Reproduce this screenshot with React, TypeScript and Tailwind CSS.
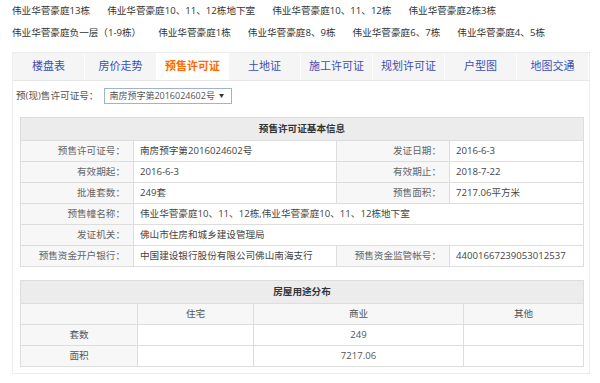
// 楼盘详情 — 预售许可证 tab

const rowA = ["伟业华菅豪庭13栋", "伟业华菅豪庭10、11、12栋地下室", "伟业华菅豪庭10、11、12栋", "伟业华菅豪庭2栋3栋"];
const rowB = ["伟业华菅豪庭负一层（1-9栋）", "伟业华菅豪庭1栋", "伟业华菅豪庭8、9栋", "伟业华菅豪庭6、7栋", "伟业华菅豪庭4、5栋"];
const tabs = ["楼盘表", "房价走势", "预售许可证", "土地证", "施工许可证", "规划许可证", "户型图", "地图交通"];

const lab = "bg-[#f7f7f7] border border-[#dddddd] text-right pr-[8px] text-[#666666] font-normal";
const val = "border border-[#dddddd] text-left pl-[6px] text-[#444444]";
const cell = "border border-[#dddddd] text-center text-[#555555]";

export default function App() {
  return (
    <div className="w-[600px] h-[383px] overflow-hidden bg-white font-['Open_Sans','Noto_Sans_CJK_SC',sans-serif] text-[9.6px] text-[#333333]">
      <div className="px-[12px]">
        <div className="h-[22px] flex items-center gap-x-[17px]">
          {rowA.map(t => <span key={t} className="whitespace-nowrap">{t}</span>)}
        </div>
        <div className="h-[22px] flex items-center gap-x-[17px]">
          {rowB.map(t => <span key={t} className="whitespace-nowrap">{t}</span>)}
        </div>
      </div>

      <div className="mx-[12px] mt-[8px] w-[578px] border border-[#ececec] pb-[6px]">
        <div className="flex h-[28px] bg-[#f5f5f5] border-b border-[#e6e6e6]">
          {tabs.map(t => (
            <div key={t}
              className={`w-[72px] flex items-center justify-center text-[11px] border-r border-white ${t === "预售许可证" ? "bg-white text-[#ff6a00] font-bold" : "text-[#3b4fb8]"}`}>{t}</div>
          ))}
        </div>

        <div className="flex items-center h-[16px] mt-[7px] pl-[3px] text-[#555555]">
          <span>预(现)售许可证号：</span>
          <div className="ml-[6px] w-[128px] h-[16px] border border-[#9fb3cf] flex items-center pl-[4px] text-[9px] text-[#555555]">
            南房预字第2016024602号 <span className="ml-[4px] text-[5px] text-[#333333]">▼</span>
          </div>
        </div>

        <table className="ml-[7px] mt-[13px] w-[563px] border-collapse table-fixed">
          <colgroup>
            <col className="w-[113px]" /><col className="w-[203px]" /><col className="w-[113px]" /><col className="w-[134px]" />
          </colgroup>
          <thead>
            <tr className="h-[23px]">
              <th colSpan={4} className="bg-[#ececec] border border-[#dddddd] font-bold text-[#333333]">预售许可证基本信息</th>
            </tr>
          </thead>
          <tbody>
            <tr className="h-[21px]"><th className={lab}>预售许可证号：</th><td className={val}>南房预字第2016024602号</td><th className={lab}>发证日期：</th><td className={val}>2016-6-3</td></tr>
            <tr className="h-[21px]"><th className={lab}>有效期起：</th><td className={val}>2016-6-3</td><th className={lab}>有效期止：</th><td className={val}>2018-7-22</td></tr>
            <tr className="h-[21px]"><th className={lab}>批准套数：</th><td className={val}>249套</td><th className={lab}>预售面积：</th><td className={val}>7217.06平方米</td></tr>
            <tr className="h-[21px]"><th className={lab}>预售幢名称：</th><td colSpan={3} className={val}>伟业华菅豪庭10、11、12栋,伟业华菅豪庭10、11、12栋地下室</td></tr>
            <tr className="h-[21px]"><th className={lab}>发证机关：</th><td colSpan={3} className={val}>佛山市住房和城乡建设管理局</td></tr>
            <tr className="h-[21px]"><th className={lab}>预售资金开户银行：</th><td className={val}>中国建设银行股份有限公司佛山南海支行</td><th className={lab}>预售资金监管帐号：</th><td className={val}>44001667239053012537</td></tr>
          </tbody>
        </table>

        <table className="ml-[7px] mt-[13px] w-[563px] border-collapse table-fixed">
          <colgroup>
            <col className="w-[117px]" /><col className="w-[116px]" /><col className="w-[210px]" /><col className="w-[120px]" />
          </colgroup>
          <thead>
            <tr className="h-[23px]">
              <th colSpan={4} className="bg-[#ececec] border border-[#dddddd] font-bold text-[#333333]">房屋用途分布</th>
            </tr>
          </thead>
          <tbody>
            <tr className="h-[21px] bg-[#f7f7f7]"><td className={cell}></td><td className={cell}>住宅</td><td className={cell}>商业</td><td className={cell}>其他</td></tr>
            <tr className="h-[21px]"><td className={`${cell} bg-[#f7f7f7]`}>套数</td><td className={cell}></td><td className={cell}>249</td><td className={cell}></td></tr>
            <tr className="h-[21px]"><td className={`${cell} bg-[#f7f7f7]`}>面积</td><td className={cell}></td><td className={cell}>7217.06</td><td className={cell}></td></tr>
          </tbody>
        </table>
      </div>
    </div>
  );
}
